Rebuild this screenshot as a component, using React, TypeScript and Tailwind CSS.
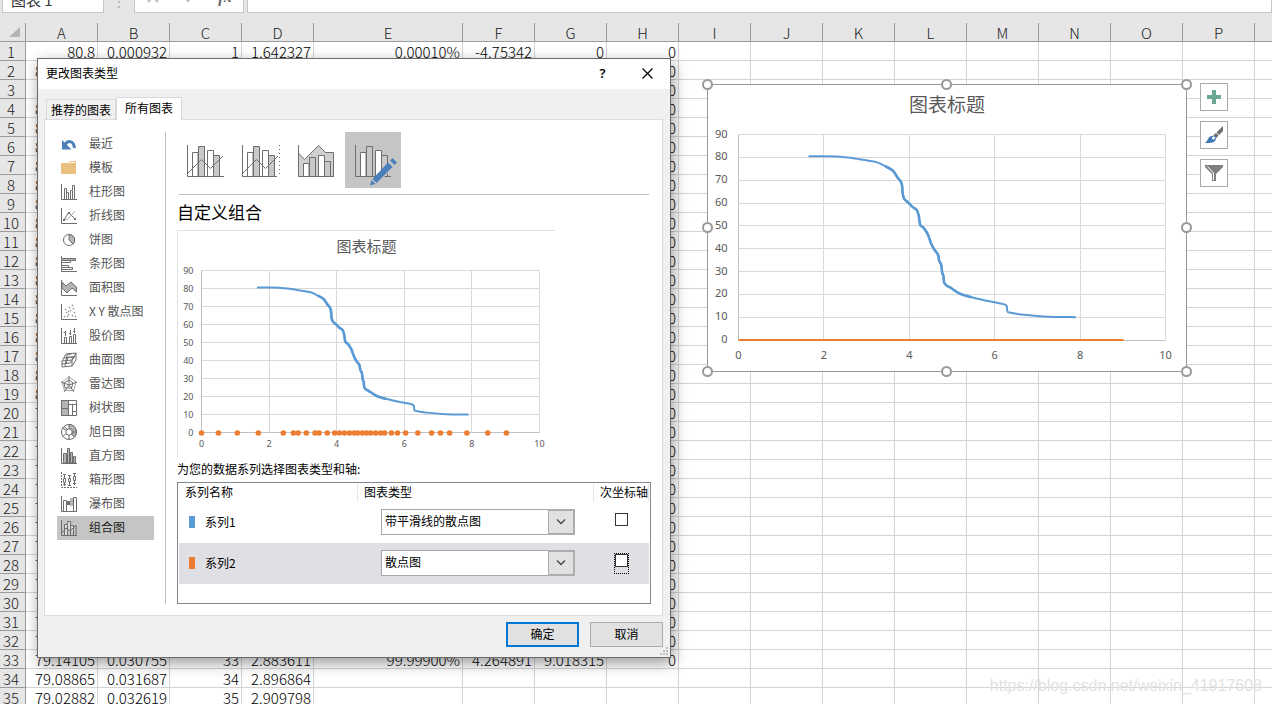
import React, { useState } from 'react';
import clsx from 'clsx';

const COLUMNS = ['A', 'B', 'C', 'D', 'E', 'F', 'G', 'H', 'I', 'J', 'K', 'L', 'M', 'N', 'O', 'P'];

const CELLS: Record<number, string[]> = {
  1: ['80.8', '0.000932', '1', '1.642327', '0.00010%', '-4.75342', '0', '0'],
  3: ['80.7', '', '', '', '', '', '', '0'],
  33: ['79.14105', '0.030755', '33', '2.883611', '99.99900%', '4.264891', '9.018315', '0'],
  34: ['79.08865', '0.031687', '34', '2.896864'],
  35: ['79.02882', '0.032619', '35', '2.909798'],
};

const rowCells = (row: number): string[] =>
  CELLS[row] ?? [row < 20 ? '80.41207' : '79.61207', '', '', '', '', '', '', '0'];

// [x, y] samples of series 1
const CURVE: [number, number][] = [
  [1.64, 80.5], [2, 80.5], [2.3, 80.4], [2.61, 79.8], [2.92, 78.9], [3.23, 77.9], [3.44, 76.1],
  [3.61, 74.2], [3.72, 71.3], [3.82, 68.6], [3.845, 64.2], [3.88, 61.8], [3.98, 60.1],
  [4.08, 58.2], [4.17, 57], [4.22, 54.5], [4.255, 50.5], [4.34, 49], [4.435, 46.2],
  [4.51, 42.3], [4.59, 39.5], [4.67, 37.5], [4.7, 34.7], [4.747, 33], [4.77, 29.5],
  [4.8, 28], [4.817, 25.1], [4.87, 23.9], [4.965, 22.9], [5.09, 21.3], [5.22, 20],
  [5.456, 18.7], [5.73, 17.5], [6, 16.5], [6.21, 15.7], [6.28, 14.9], [6.295, 12.8],
  [6.35, 12], [6.75, 10.9], [7.22, 10.2], [7.9, 10],
];

const DOTS = [
  0, 0.5, 1.06, 1.68, 2.42, 2.72, 2.86, 3.1, 3.36, 3.48, 3.72, 3.94, 4.08, 4.23, 4.38, 4.52, 4.62,
  4.76, 4.88, 5, 5.15, 5.3, 5.42, 5.62, 5.8, 6.04, 6.4, 6.81, 7.07, 7.34, 7.85, 8.47, 9.02,
];

// Catmull-Rom spline through the points
const smoothPath = (pts: [number, number][]) =>
  pts.reduce((d, p, i) => {
    if (i === 0) return `M${p[0]} ${p[1]}`;
    const prev = pts[i - 1];
    const before = pts[i - 2] ?? prev;
    const after = pts[i + 1] ?? p;
    const c1 = [prev[0] + (p[0] - before[0]) / 6, prev[1] + (p[1] - before[1]) / 6];
    const c2 = [p[0] - (after[0] - prev[0]) / 6, p[1] - (after[1] - prev[1]) / 6];
    return `${d}C${c1[0]} ${c1[1]} ${c2[0]} ${c2[1]} ${p[0]} ${p[1]}`;
  }, '');

interface ChartProps {
  width: number;
  height: number;
  left: number;
  right: number;
  top: number;
  bottom: number;
  titleY: number;
  titleSize: number;
  labelSize: number;
  labelGap: number;
  xLabelY: number;
  dots?: boolean;
}

const Chart: React.FC<ChartProps> = (p) => {
  const sx = (v: number) => p.left + ((p.right - p.left) * v) / 10;
  const sy = (v: number) => p.bottom - ((p.bottom - p.top) * v) / 90;
  const snap = (n: number) => Math.floor(n) + 0.5;

  return (
    <svg
      width={p.width}
      height={p.height}
      viewBox={`0 0 ${p.width} ${p.height}`}
      className="block font-['Noto_Sans','Noto_Sans_CJK_SC',sans-serif]"
      fill="#595959"
    >
      <text x={p.width / 2} y={p.titleY} fontSize={p.titleSize} textAnchor="middle" className="font-['Noto_Sans_CJK_SC',sans-serif]">
        图表标题
      </text>
      {[0, 10, 20, 30, 40, 50, 60, 70, 80, 90].map((v) => (
        <g key={v}>
          <path d={`M${p.left} ${snap(sy(v))}H${p.right}`} stroke={v === 0 ? '#bfbfbf' : '#d9d9d9'} />
          <text x={p.left - p.labelGap} y={Math.round(sy(v)) + 3} fontSize={p.labelSize} textAnchor="end">{v}</text>
        </g>
      ))}
      {[0, 2, 4, 6, 8, 10].map((v) => (
        <g key={v}>
          <path d={`M${snap(sx(v))} ${p.top}V${p.bottom}`} stroke={v === 0 ? '#bfbfbf' : '#d9d9d9'} />
          <text x={sx(v)} y={p.xLabelY} fontSize={p.labelSize} textAnchor="middle">{v}</text>
        </g>
      ))}
      <path
        d={smoothPath(CURVE.map(([x, y]) => [sx(x), sy(y)]))}
        fill="none"
        stroke="#5b9bd5"
        strokeWidth={2}
        strokeLinejoin="round"
      />
      <path
        d={smoothPath(CURVE.filter(([x]) => x > 3.4 && x < 5.5).map(([x, y]) => [sx(x), sy(y)]))}
        fill="none"
        stroke="#5b9bd5"
        strokeWidth={2.6}
        strokeLinejoin="round"
      />
      {p.dots ? (
        DOTS.map((v) => <circle key={v} cx={sx(v)} cy={p.bottom + 0.5} r={2.8} fill="#ed7d31" />)
      ) : (
        <path d={`M${p.left} ${p.bottom}H${sx(9.02)}`} stroke="#ed7d31" strokeWidth={2} />
      )}
    </svg>
  );
};

const AXIS = 'M.5 0V15.5H16';

const TYPES: { name: string; icon: React.ReactNode }[] = [
  {
    name: '最近',
    icon: (
      <>
        <path d="M4 9C6 4.500 12.500 3.500 13.500 12" stroke="#4a7fb8" strokeWidth="3" />
        <path d="M1 4V13.500H10.500Z" fill="#4a7fb8" stroke="none" />
      </>
    ),
  },
  {
    name: '模板',
    icon: (
      <>
        <path d="M0 3H7L9 1H15V14H0Z" fill="#e9c080" stroke="none" />
        <path d="M8 3.500L9.500 2.500H14" stroke="#fff" />
      </>
    ),
  },
  { name: '柱形图', icon: <><path d={AXIS} /><path d="M3.500 15V4.500H5.500V15M5.500 8.500H7.500V15M9.500 15V6.500H11.500V15M11.500 6V1.500H13.500V15" /></> },
  {
    name: '折线图',
    icon: (
      <>
        <path d={AXIS} />
        <path d="M3 12L7.500 4.500L14 11" />
        <path d="M3 12L7 11L14 3" stroke="#a6a6a6" />
        <path d="M2 11h2v2H2zM7 4h2v2H7zM13 10h2v2h-2z" fill="#6e6e6e" stroke="none" />
      </>
    ),
  },
  { name: '饼图', icon: <><circle cx="8" cy="8" r="5.500" /><path d="M8 2.500A5.500 5.500 0 0 1 12 12L8 8Z" fill="#b5b5b5" /></> },
  { name: '条形图', icon: <><path d={AXIS} /><path d="M.5 2.500H14.500V4.500H.5" fill="#b5b5b5" /><path d="M.5 6.500H9.500V4.500M.5 9.500H7.500V11.500M.5 11.500H11.500V13.500H.5" /></> },
  { name: '面积图', icon: <><path d={AXIS} /><path d="M1 2L5 6L10 2L15.500 7V12L11 8L6 13L1 8Z" fill="#b5b5b5" /></> },
  {
    name: 'X Y 散点图',
    icon: (
      <>
        <path d={AXIS} />
        <path
          d="M3 12h1v1H3zM5 8h1v1H5zM4 5h1v1H4zM7 10h1v1H7zM8 3h1v1H8zM9 6h1v1H9zM12 4h1v1h-1zM13 8h1v1h-1zM11 11h1v1h-1zM11 1h1v1h-1zM14 12h1v1h-1zM6 12h1v1H6zM7 7h1v1H7z"
          fill="#8a8a8a"
          stroke="#8a8a8a"
          strokeWidth=".4"
        />
      </>
    ),
  },
  { name: '股价图', icon: <><path d={AXIS} /><path d="M4.500 3V8M2.500 4.500H4M9.500 2V7M8 5.500H9.500M13.500 0V5M12 3.500H13.500M3.500 15V9.500H5.500V15M8.500 15V8.500H10.500V15M12.500 15V6.500H14.500V15" /></> },
  { name: '曲面图', icon: <><path d="M1 9L5 2L15 1V8L11 14L1 15Z" /><path d="M1 9L11 8L15 1M11 8V14M3 6L13 4.500M5 12L7 5L13 6M1 12L9 11L14 4M4 14L6 3L11 1.500" /></> },
  { name: '雷达图', icon: <><path d="M8 1L15 6L12.500 14.500H3.500L1 6Z" stroke="#a6a6a6" /><path d="M8 0V9L0 6M8 9L16 6M8 9L3 16M8 9L13 16M8 4L12 7L10.500 12L4 12L3 7Z" /></> },
  { name: '树状图', icon: <><rect x=".5" y=".5" width="7" height="15" fill="#b5b5b5" /><path d="M.5 8.500H7.500M7.500 .5H15.500V15.500H7.500M7.500 4.500H15.500M11.500 4.500V15.500M11.500 11.500H15.500" /></> },
  { name: '旭日图', icon: <><circle cx="8" cy="8" r="7.500" /><path d="M8 .5A7.500 7.500 0 0 1 13.500 13L10.500 10.500A3 3 0 0 0 8 5Z" fill="#b5b5b5" /><circle cx="8" cy="8" r="3.200" fill="#fff" /><path d="M5 6L1.500 4M5 9.500L2 12.500M8 11V15.500M11 8H15.500M3 2.500L6.500 5.500" /></> },
  { name: '直方图', icon: <><path d={AXIS} /><path d="M2.500 15V5.500H5.500V15ZM6.500 15V.5H8.500V15ZM9.500 15V4.500H11.500V15ZM12.500 15V8.500H14.500V15Z" fill="#b5b5b5" /></> },
  { name: '箱形图', icon: <><path d={AXIS} strokeDasharray="2 1" /><path d="M3.500 2V14M8.500 3V14M13.500 1V13M2 2.500H5M7 3.500H10M12 1.500H15M2 12.500H5M7 13.500H10M12 11.500H15" /><path d="M2.500 6.500H4.500V10.500H2.500ZM7.500 6.500H9.500V9.500H7.500ZM12.500 4.500H14.500V8.500H12.500Z" fill="#fff" /></> },
  { name: '瀑布图', icon: <><path d={AXIS} /><path d="M2.500 15V4.500H5.500V15M12.500 15V1.500H15.500V15M5.500 5.500H9" /><path d="M6 5h3v4H6z" fill="#6e6e6e" stroke="none" /><path d="M9 2h3v8H9z" fill="#b5b5b5" stroke="none" /></> },
  { name: '组合图', icon: <><path d={AXIS} /><path d="M3.500 15V4.500H6.500V15M6.500 4V1.500H9.500V15M9.500 5.500H12.500V15" fill="#ddd" /><path d="M1 13L5 8L9 11L15 5V15" /></> },
];

const COMBO_ICONS: React.ReactNode[] = [
  <>
    <path d="M5.500 31V7.500H11V31M20.500 31V5.500H26.500V31" fill="#fff" />
    <path d="M11.500 31V1.500H17.500V31M26.500 31V10.500H32.500V31" fill="#c8c8c8" />
    <path d="M.5 0V31.500H37M1 28L14.500 14.500L23.500 23.500L36 11" />
  </>,
  <>
    <path d="M5.500 31V7.500H11V31M20.500 31V5.500H26.500V31" fill="#fff" />
    <path d="M11.500 31V1.500H17.500V31M26.500 31V10.500H32.500V31" fill="#c8c8c8" />
    <path d="M.5 0V31.500H35M1 28L14.500 14.500L23.500 23.500L36 11" />
    <path d="M37.500 0V32" strokeDasharray="1 3" />
  </>,
  <>
    <path d="M.5 31V8L6.500 14.500L20.500 .5L27.500 7.500H35.500V31Z" fill="#d0d0d0" stroke="none" />
    <path d="M.5 8L6.500 14.500L20.500 .5L27.500 7.500H35.500V31" />
    <path d="M5.500 31V18.500H11V31M20.500 31V10.500H26.500V31" fill="#fff" />
    <path d="M11.500 31V12.500H17.500V31M26.500 31V16.500H32.500V31" fill="#c8c8c8" />
    <path d="M.5 0V31.500H36" />
  </>,
  <>
    <path d="M5.500 31V7.500H11V31M20.500 31V5.500H26.500V31" fill="#fff" />
    <path d="M11.500 31V1.500H17.500V31M26.500 31V10.500H32.500V31" fill="#c8c8c8" />
    <path d="M.5 0V31.500H36" />
    <path d="M13 40L33 19L37 13L43 18L21 40Z" fill="#c5c5c5" stroke="none" />
    <path d="M15 40.500L16.500 35L20.500 39ZM17.500 34L33 17.500L37.500 22L21.500 38ZM35 15.500L37.500 13L42 17.500L39.500 20Z" fill="#4a7fba" stroke="none" />
  </>,
];

const SERIES = [
  { id: 's1', name: '系列1', type: '带平滑线的散点图', color: 'bg-[#5b9bd5]' },
  { id: 's2', name: '系列2', type: '散点图', color: 'bg-[#ed7d31]' },
];

const HANDLES = [
  '-left-1.5 -top-1.5', 'left-[233px] -top-1.5', '-right-1.5 -top-1.5',
  '-left-1.5 top-[137px]', '-right-1.5 top-[137px]',
  '-left-1.5 -bottom-1.5', 'left-[233px] -bottom-1.5', '-right-1.5 -bottom-1.5',
];

const FormulaBar = () => (
  <div className="h-[13px] flex items-end overflow-hidden text-[#333]">
    <input
      aria-label="名称框"
      defaultValue="图表 1"
      className="ml-0.5 w-[102px] h-6 shrink-0 bg-white border border-[#c6c6c6] pl-2 pb-1 text-[15px] leading-4 outline-none"
    />
    <span className="w-[30px] shrink-0 text-center text-sm leading-6 text-[#aaa]">⋮</span>
    <div className="w-[110px] h-6 shrink-0 bg-white border border-[#c6c6c6] flex justify-around items-center pb-2">
      <button aria-label="取消输入" className="w-6 h-4 flex justify-center">
        <svg width="12" height="14" stroke="#b8b8b8" strokeWidth="2"><path d="M1 2L11 13M11 2L1 13" /></svg>
      </button>
      <button aria-label="输入" className="w-6 h-4 flex justify-center">
        <svg width="12" height="14" fill="none" stroke="#b8b8b8" strokeWidth="2"><path d="M1 8L5 12L11 3" /></svg>
      </button>
      <button aria-label="插入函数" className="w-6 h-4 font-['Liberation_Serif',serif] italic font-bold text-base leading-4 text-[#666]">fx</button>
    </div>
    <input aria-label="编辑栏" className="ml-[3px] flex-1 h-6 bg-white border border-[#c6c6c6] outline-none" />
  </div>
);

const Sheet = () => (
  <table className="mt-2.5 w-full table-fixed border-separate border-spacing-0 text-[15px] leading-4 font-light text-black bg-white">
    <colgroup>
      <col className="w-[26px]" />
      {COLUMNS.map((c) => (
        <col key={c} className={c === 'E' ? 'w-[149px]' : 'w-[72px]'} />
      ))}
      <col />
    </colgroup>
    <thead>
      <tr className="h-[19px] bg-[#e6e6e6] text-[#222]">
        <th className="p-0 border-r border-b border-[#9b9b9b]">
          <svg width="12" height="12" className="ml-auto mr-1"><path d="M11 1V11H0Z" fill="#b4b4b4" /></svg>
        </th>
        {COLUMNS.map((c) => (
          <th key={c} scope="col" className="p-0 pt-0.5 font-light border-r border-b border-[#9b9b9b]">{c}</th>
        ))}
        <th className="p-0 border-b border-[#9b9b9b]" />
      </tr>
    </thead>
    <tbody>
      {Array.from({ length: 35 }, (_, i) => i + 1).map((row) => (
        <tr key={row} className="h-[19px]">
          <th scope="row" className="p-0 pt-0.5 pr-[3px] font-light text-center bg-[#e6e6e6] text-[#222] border-r border-b border-[#9b9b9b]">{row}</th>
          {COLUMNS.map((c, i) => (
            <td key={c} className="p-0 pt-0.5 pr-0.5 text-right border-r border-b border-[#d4d4d4] whitespace-nowrap">{rowCells(row)[i]}</td>
          ))}
          <td className="p-0 border-b border-[#d4d4d4]" />
        </tr>
      ))}
    </tbody>
  </table>
);

const SheetChart = () => (
  <div className="absolute left-[707px] top-[84px] flex items-start">
    <div className="relative bg-white border border-[#999]">
      <Chart width={478} height={286} left={30.5} right={457.5} top={49.5} bottom={255} titleY={27} titleSize={19} labelSize={11} labelGap={11} xLabelY={274} />
      {HANDLES.map((pos) => (
        <span key={pos} className={clsx('absolute size-[11px] rounded-full bg-white border-2 border-[#999]', pos)} />
      ))}
    </div>
    <div className="ml-[13px] -mt-px flex flex-col gap-2.5">
      <button aria-label="图表元素" className="size-7 bg-white border border-[#ababab] flex items-center justify-center">
        <svg width="14" height="14"><path d="M5 0H9V5H14V9H9V14H5V9H0V5H5Z" fill="#6aa893" /></svg>
      </button>
      <button aria-label="图表样式" className="size-7 bg-white border border-[#ababab] flex items-center justify-center">
        <svg width="18" height="18">
          <path d="M18 0V5L14 9L11.500 6.500Z" fill="#6e6e6e" />
          <path d="M11 7L13.500 9.500L11.500 12L8.500 9Z" fill="#6e6e6e" />
          <path d="M0 17C3 15 3 10 7 10L11 13C10 17 6 17 0 17Z" fill="#3f78b5" />
          <circle cx="8.500" cy="12" r="2" fill="#fff" stroke="#3f78b5" />
        </svg>
      </button>
      <button aria-label="图表筛选器" className="size-7 bg-white border border-[#ababab] flex items-center justify-center">
        <svg width="18" height="16">
          <path d="M0 0H18V2L11 9V16H7V9L0 2Z" fill="#7f7f7f" />
          <path d="M2.500 1.500L8.500 8V15" stroke="#fff" fill="none" />
        </svg>
      </button>
    </div>
  </div>
);

const SeriesTable = () => (
  <div className="h-[122px] border border-[#828790] bg-white p-px">
    <table className="w-full table-fixed border-separate border-spacing-0 text-left">
      <colgroup>
        <col className="w-[179px]" />
        <col className="w-[236px]" />
        <col />
      </colgroup>
      <thead>
        <tr className="h-[18px]">
          <th scope="col" className="p-0 pb-0.5 pl-1.5 font-normal border-r border-[#e5e5e5]">系列名称</th>
          <th scope="col" className="p-0 pb-0.5 pl-1.5 font-normal border-r border-[#e5e5e5]">图表类型</th>
          <th scope="col" className="p-0 pb-0.5 pl-1.5 font-normal whitespace-nowrap border-r border-[#e5e5e5]">次坐标轴</th>
        </tr>
      </thead>
      <tbody>
        {SERIES.map((s, i) => (
          <tr key={s.id} className={clsx('h-[41px]', i === 1 && 'bg-[#e0dfe4]')}>
            <td className="p-0 pb-0.5">
              <div className="flex items-center pl-2.5 gap-2.5">
                <span className={clsx('w-1.5 h-3', s.color)} />
                {s.name}
              </div>
            </td>
            <td className="p-0 pb-0.5">
              <div className="relative ml-[23px] w-[194px]">
                <select
                  aria-label={`${s.name} 图表类型`}
                  defaultValue={s.type}
                  className="block w-full h-[26px] appearance-none bg-white border border-[#a8a8ac] pl-[3px] pb-0.5 outline-none"
                >
                  {SERIES.map((o) => (
                    <option key={o.id}>{o.type}</option>
                  ))}
                </select>
                <span className="absolute right-0 inset-y-0 w-[27px] border-2 border-l border-[#adadb0] bg-[#e1e1e1] flex items-center justify-center pointer-events-none">
                  <svg width="10" height="6" fill="none" stroke="#444" strokeWidth="1.300"><path d="M1 .5L5 4.500L9 .5" /></svg>
                </span>
              </div>
            </td>
            <td className="p-0">
              <span className={clsx('block ml-5 w-[15px] h-[21px] border border-dotted', i === 1 ? 'border-black' : 'border-transparent')}>
                <input
                  type="checkbox"
                  aria-label={`${s.name} 次坐标轴`}
                  className="block size-[13px] appearance-none bg-white border border-[#333] checked:bg-[#333]"
                />
              </span>
            </td>
          </tr>
        ))}
      </tbody>
    </table>
  </div>
);

const ChartTypeDialog = () => {
  const [type, setType] = useState('组合图');
  const [combo, setCombo] = useState(3);

  return (
    <div
      role="dialog"
      aria-label="更改图表类型"
      className="absolute left-[37px] top-[58px] w-[634px] bg-[#f0f0f0] border border-[#6b6b6b] shadow-[2px_5px_14px_rgba(0,0,0,0.4)] text-xs leading-4 text-black"
    >
      <div className="h-[30px] bg-white flex items-center pl-2 pb-0.5">
        <h1 className="flex-1">更改图表类型</h1>
        <button aria-label="帮助" className="w-[45px] h-full font-['Noto_Sans',sans-serif] font-semibold text-[13px]">?</button>
        <button aria-label="关闭" className="w-[45px] h-full flex items-center justify-center">
          <svg width="11" height="11" stroke="#000" strokeWidth="1.200"><path d="M.5 .5L10.500 10.500M10.500 .5L.5 10.500" /></svg>
        </button>
      </div>

      <div role="tablist" className="h-[30px] flex items-end pl-2">
        <button role="tab" aria-selected={false} className="h-5 px-1 border border-b-0 border-[#d9d9d9]">推荐的图表</button>
        <button role="tab" aria-selected={true} className="relative -mb-px h-[23px] px-2 pb-0.5 bg-white border border-b-0 border-[#d9d9d9]">所有图表</button>
      </div>

      <div className="ml-1.5 mr-[7px] bg-white border border-[#dcdcdc] flex pb-[11px]">
        <nav className="mt-3 w-[121px] pl-3 pr-[11px] border-r border-[#c0c0c0]">
          <ul>
            {TYPES.map((item) => (
              <li key={item.name}>
                <button
                  onClick={() => setType(item.name)}
                  className={clsx(
                    'w-full h-6 pl-1 flex items-center gap-3 whitespace-nowrap',
                    type === item.name ? 'bg-[#c5c5c5] text-[#222]' : 'text-[#555]',
                  )}
                >
                  <svg width="16" height="16" fill="none" stroke="#6e6e6e" className="shrink-0">{item.icon}</svg>
                  <span className="pb-0.5">{item.name}</span>
                </button>
              </li>
            ))}
          </ul>
        </nav>

        <div className="flex-1 min-w-0 pt-3 px-[11px]">
          <div className="flex">
            {COMBO_ICONS.map((icon, i) => (
              <button
                key={i}
                aria-label={`组合 ${i + 1}`}
                onClick={() => setCombo(i)}
                className={clsx('size-14 pt-3', i === 0 || i === 3 ? 'pl-2.5' : 'pl-[9px]', combo === i && 'bg-[#c5c5c5]')}
              >
                <svg width="44" height="42" fill="none" stroke="#6e6e6e">{icon}</svg>
              </button>
            ))}
          </div>
          <div className="mt-1.5 mx-0.5 border-t border-[#c0c0c0]" />
          <h2 className="h-[35px] flex items-center pb-0.5 text-[17px]">自定义组合</h2>
          <div className="w-[378px] h-[227px] border-t border-l border-[#e0e0e0]">
            <Chart width={377} height={226} left={23.5} right={361.5} top={39.5} bottom={201.5} titleY={21} titleSize={15} labelSize={9} labelGap={8} xLabelY={216} dots />
          </div>
          <p className="h-[25px] flex items-center pb-0.5">为您的数据系列选择图表类型和轴:</p>
          <SeriesTable />
        </div>
      </div>

      <div className="h-[41px] pt-1.5 pr-[7px] flex justify-end gap-[11px] items-start">
        <button className="w-[73px] h-[25px] pb-0.5 bg-[#e1e1e1] border-2 border-[#0078d7]">确定</button>
        <button className="w-[73px] h-[25px] pb-0.5 bg-[#e1e1e1] border border-[#adadad]">取消</button>
      </div>
      <svg width="8" height="8" className="absolute right-0.5 bottom-0.5" fill="#bfbfbf">
        <path d="M6 0h2v2H6zM3 3h2v2H3zM6 3h2v2H6zM0 6h2v2H0zM3 6h2v2H3zM6 6h2v2H6z" />
      </svg>
    </div>
  );
};

export default function App() {
  return (
    <main className="relative h-screen overflow-hidden bg-[#e6e6e6] font-['Noto_Sans_CJK_SC',sans-serif]">
      <FormulaBar />
      <Sheet />
      <SheetChart />
      <ChartTypeDialog />
      <p className="absolute right-2.5 bottom-2 font-['Liberation_Sans',sans-serif] text-base leading-5 text-[#e2e2e2]">
        https://blog.csdn.net/weixin_41917608
      </p>
    </main>
  );
}
